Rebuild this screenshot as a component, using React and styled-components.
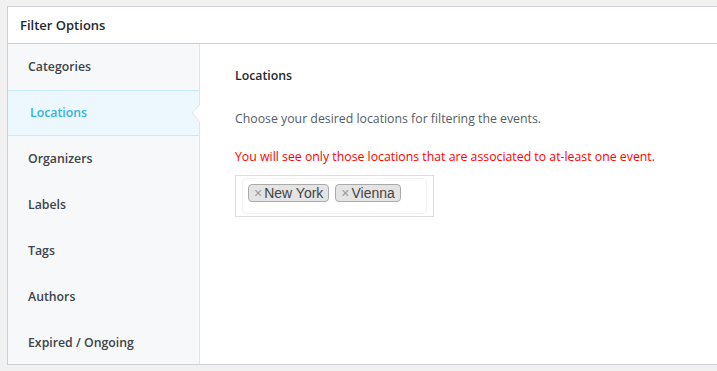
import React, { useState } from "react";
import styled, { createGlobalStyle } from "styled-components";

const GlobalStyle = createGlobalStyle`
  body {
    margin: 0;
    background: #f1f1f1;
    font-family: "Open Sans", "Noto Sans", sans-serif;
    color: #23282d;
  }
`;

const Page = styled.div`
  padding: 6px 0 0 7px;
  height: 371px;
  box-sizing: border-box;
  overflow: hidden;
`;

const Panel = styled.div`
  width: 720px;
  background: #fff;
  border: 1px solid #ccd0d4;
  border-right: none;
`;

const Header = styled.div`
  height: 36px;
  display: flex;
  align-items: center;
  padding-left: 12px;
  border-bottom: 1px solid #ccd0d4;
  font-size: 13px;
  font-weight: 600;
  color: #23282d;
`;

const Body = styled.div`
  display: flex;
  height: 320px;
`;

const Sidebar = styled.ul`
  list-style: none;
  margin: 0;
  padding: 0;
  width: 191px;
  background: #f7f8f9;
  border-right: 1px solid #e2e4e7;
`;

const Item = styled.li`
  position: relative;
  height: 46px;
  box-sizing: border-box;
  display: flex;
  align-items: center;
  padding: 0 0 2px ${(p) => (p.$active ? "22px" : "20px")};
  font-size: 12.3px;
  font-weight: 600;
  color: ${(p) => (p.$active ? "#33b3dc" : "#3c434a")};
  background: ${(p) => (p.$active ? "#ecf8fd" : "transparent")};
  border-top: 1px solid ${(p) => (p.$active ? "#c9e9f5" : "transparent")};
  border-bottom: 1px solid ${(p) => (p.$active ? "#c9e9f5" : "transparent")};
  cursor: pointer;
`;

const Arrow = styled.svg`
  position: absolute;
  right: -1px;
  top: 13px;
`;

const Content = styled.div`
  flex: 1;
  padding: 23px 0 0 35px;
`;

const Title = styled.h3`
  margin: 0 0 25px;
  font-size: 12.3px;
  font-weight: 600;
  color: #23282d;
  line-height: 18px;
`;

const Text = styled.p`
  margin: 0 0 ${(p) => (p.$warn ? "9px" : "20px")};
  font-size: 12.3px;
  line-height: 18px;
  color: ${(p) => (p.$warn ? "#ff0000" : "#555d66")};
`;

const Select = styled.div`
  width: 199px;
  height: 42px;
  box-sizing: border-box;
  border: 1px solid #ddd;
  padding: 2px 6px;
`;

const Inner = styled.div`
  height: 36px;
  box-sizing: border-box;
  border: 1px solid #f3f3f3;
  border-radius: 4px;
  display: flex;
  align-items: flex-start;
  gap: 6px;
  padding: 5px 0 0 5px;
`;

const Tag = styled.span`
  display: inline-flex;
  align-items: center;
  height: 18px;
  box-sizing: border-box;
  padding: 0 5px 0 5px;
  background: #e4e4e4;
  border: 1px solid #aaa;
  border-radius: 4px;
  font-family: "Liberation Sans", Arial, sans-serif;
  font-size: 14px;
  color: #444;
`;

const Remove = styled.span`
  color: #999;
  font-size: 14px;
  margin-right: 2px;
  cursor: pointer;
`;

const items = [
  "Categories",
  "Locations",
  "Organizers",
  "Labels",
  "Tags",
  "Authors",
  "Expired / Ongoing",
];

export default function App() {
  const [active, setActive] = useState("Locations");
  const [tags, setTags] = useState(["New York", "Vienna"]);

  return (
    <>
      <GlobalStyle />
      <Page>
        <Panel>
          <Header>Filter Options</Header>
          <Body>
            <Sidebar>
              {items.map((it) => (
                <Item key={it} $active={it === active} onClick={() => setActive(it)}>
                  {it}
                  {it === active && (
                    <Arrow width="9" height="18" viewBox="0 0 9 18">
                      <polygon points="9,0 1,9 9,18" fill="#fff" />
                      <polyline points="9,0 1,9 9,18" fill="none" stroke="#e2e4e7" strokeWidth="1" />
                    </Arrow>
                  )}
                </Item>
              ))}
            </Sidebar>
            <Content>
              <Title>Locations</Title>
              <Text>Choose your desired locations for filtering the events.</Text>
              <Text $warn>
                You will see only those locations that are associated to at-least one event.
              </Text>
              <Select>
                <Inner>
                  {tags.map((t) => (
                    <Tag key={t}>
                      <Remove onClick={() => setTags(tags.filter((x) => x !== t))}>×</Remove>
                      {t}
                    </Tag>
                  ))}
                </Inner>
              </Select>
            </Content>
          </Body>
        </Panel>
      </Page>
    </>
  );
}
